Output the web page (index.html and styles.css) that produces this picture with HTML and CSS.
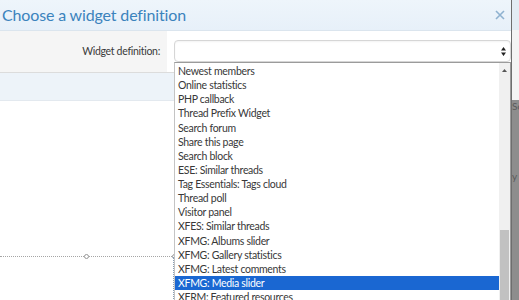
FILE: index.html
```html
<!DOCTYPE html>
<html lang="en">
<head>
  <meta charset="UTF-8" />
  <title>Choose a widget definition</title>
  <link rel="stylesheet" href="styles.css">
</head>
<body>

<div class="screen">
  <div class="modal">
    <div class="modal-head">
      <h2>Choose a widget definition</h2>
      <svg class="close" width="10" height="10" viewBox="0 0 10 10">
        <path d="M1 1L9 9M9 1L1 9" stroke="#8fb2d0" stroke-width="1.6" fill="none" />
      </svg>
    </div>
    <div class="form-row">
      <label class="form-label">Widget definition:</label>
      <div class="form-ctrl">
        <div class="select">
          <svg class="arrows" width="5" height="9" viewBox="0 0 5 9">
            <path d="M2.5 0L5 3.5H0Z M2.5 9L5 5.5H0Z" fill="#222" />
          </svg>
        </div>
      </div>
    </div>
    <div class="form-foot"></div>
    <div class="canvas">
      <div class="guide"><span class="handle mid"></span><span class="handle end"></span></div>
      <div class="guide-v"></div>
    </div>

    <div class="dropdown">
      <ul class="options">
        <li>Newest members</li>
        <li>Online statistics</li>
        <li>PHP callback</li>
        <li>Thread Prefix Widget</li>
        <li>Search forum</li>
        <li>Share this page</li>
        <li>Search block</li>
        <li>ESE: Similar threads</li>
        <li>Tag Essentials: Tags cloud</li>
        <li>Thread poll</li>
        <li>Visitor panel</li>
        <li>XFES: Similar threads</li>
        <li>XFMG: Albums slider</li>
        <li>XFMG: Gallery statistics</li>
        <li>XFMG: Latest comments</li>
        <li class="selected">XFMG: Media slider</li>
        <li>XFRM: Featured resources</li>
      </ul>
      <div class="scrollbar">
        <svg class="up" width="5" height="3" viewBox="0 0 5 3"><path d="M2.5 0L5 3H0Z" fill="#555" /></svg>
        <div class="thumb"></div>
      </div>
    </div>
  </div>

  <div class="edge">
    <div class="edge-top"></div>
    <div class="edge-bottom"><span>Sc</span><span class="low">y e</span></div>
  </div>
</div>

</body>
</html>
```

FILE: styles.css
```css
body {
  margin: 0;
  background: #fff;
  font-family: Lato, "Open Sans", sans-serif;
  overflow: hidden;
}
.screen {
  display: flex;
  width: 519px;
  height: 300px;
  overflow: hidden;
}
.modal {
  position: relative;
  width: 511px;
  flex: none;
  background: #fff;
}
.modal-head {
  height: 30px;
  display: flex;
  align-items: center;
  justify-content: space-between;
  background: linear-gradient(#eef5fb, #e7f0f9);
  border-bottom: 1px solid #dbe5ee;
}
.modal-head h2 {
  margin: 0 0 2px 2px;
  font-weight: normal;
  font-size: 16px;
  letter-spacing: -0.15px;
  color: #3b83bd;
}
.close {
  margin: 0 6px 1px 0;
}
.form-row {
  display: flex;
  height: 41px;
  border-bottom: 1px solid #dcdcdc;
}
.form-label {
  width: 160px;
  padding-right: 7px;
  background: #f5f5f5;
  text-align: right;
  font-size: 10.5px;
  letter-spacing: -0.3px;
  color: #3a3a3a;
  line-height: 40px;
}
.form-ctrl {
  flex: 1;
  padding: 9px 0 0 7px;
}
.select {
  height: 20px;
  border: 1px solid #d6d6d6;
  border-radius: 4px;
  display: flex;
  justify-content: flex-end;
  align-items: center;
  box-shadow: inset 0 1px 2px rgba(0,0,0,0.05);
}
.arrows {
  margin-right: 4px;
}
.form-foot {
  height: 27px;
  background: #edf3f9;
  border-bottom: 1px solid #e3e9ef;
}
.canvas {
  position: relative;
  height: 199px;
}
.guide {
  position: absolute;
  left: 0;
  top: 155px;
  width: 174px;
  border-top: 1px dotted #a5a5a5;
}
.guide-v {
  position: absolute;
  left: 173px;
  top: 156px;
  height: 50px;
  border-left: 1px dotted #8a9fb5;
}
.handle {
  position: absolute;
  top: -3px;
  width: 3px;
  height: 3px;
  border: 1px solid #999;
  border-radius: 50%;
  background: #fff;
}
.handle.mid { left: 84px; }
.handle.end { left: 172px; }
.dropdown {
  position: absolute;
  left: 174px;
  top: 62px;
  width: 335px;
  height: 250px;
  display: flex;
  background: #fff;
  border: 1px solid #9b9b9b;
  border-left-color: #c4c4c4;
}
.options {
  list-style: none;
  margin: 0;
  padding: 1px 0 0;
  flex: 1;
}
.options li {
  height: 14.13px;
  line-height: 14px;
  padding-left: 3px;
  font-size: 10.5px;
  letter-spacing: -0.3px;
  color: #383838;
  white-space: nowrap;
}
.options li.selected {
  background: #1a67d2;
  color: #fff;
}
.scrollbar {
  position: relative;
  width: 11px;
  background: #f0f0f0;
}
.up {
  position: absolute;
  left: 3px;
  top: 6px;
}
.thumb {
  position: absolute;
  left: 1px;
  right: 1px;
  top: 167px;
  bottom: 0;
  background: #c1c1c1;
}
.edge {
  flex: 1;
  display: flex;
  flex-direction: column;
  border-left: 1px solid #6e6e6e;
  overflow: hidden;
}
.edge-top {
  height: 100px;
  background: linear-gradient(#e3ecf4 30px, #f4f4f4 30px);
}
.edge-bottom {
  flex: 1;
  background: #8d8d8d;
  font-size: 10px;
  color: #5a5a5a;
  display: flex;
  flex-direction: column;
  white-space: nowrap;
}
.edge-bottom .low {
  margin-top: 58px;
}
```
